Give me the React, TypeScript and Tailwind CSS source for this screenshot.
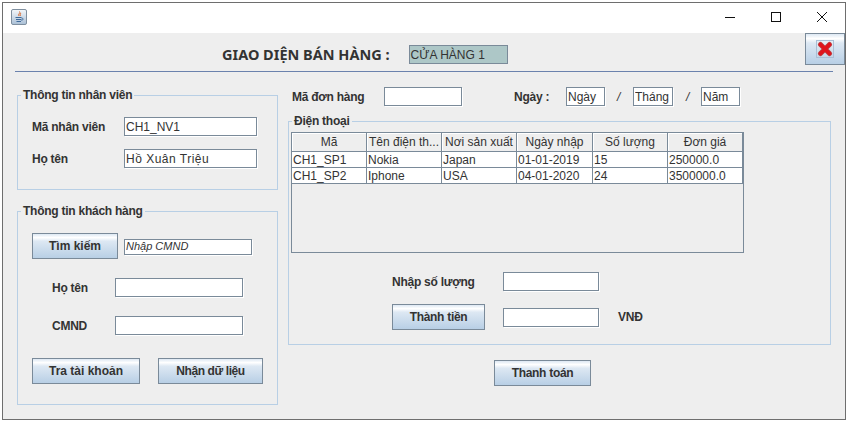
import type { ReactNode } from "react";

const FONT = "font-['Liberation_Sans',Arial,sans-serif]";
const LABEL = "text-[12px] font-bold text-[#333333] leading-none whitespace-nowrap tracking-[-0.25px]";
const METAL = "bg-[linear-gradient(#dde8f3,#ffffff_15%,#dde8f3_30%,#b8cfe5)]";

const COLUMNS = ["Mã", "Tên điện th...", "Nơi sản xuất", "Ngày nhập", "Số lượng", "Đơn giá"];
const ROWS = [
  ["CH1_SP1", "Nokia", "Japan", "01-01-2019", "15", "250000.0"],
  ["CH1_SP2", "Iphone", "USA", "04-01-2020", "24", "3500000.0"],
];

function Field({ value = "", width, className = "" }: { value?: string; width: string; className?: string }) {
  return (
    <input
      readOnly
      value={value}
      className={`${width} h-[19px] shrink-0 border border-[#7a8a99] bg-white pl-[1px] pt-[1px] text-[12px] text-[#333333] shadow-[1px_1px_0_#ffffff] outline-none ${className}`}
    />
  );
}

function Button({ children, width, className = "" }: { children: ReactNode; width: string; className?: string }) {
  return (
    <button
      className={`${width} ${className} ${METAL} h-[26px] shrink-0 border border-[#7a8a99] text-[12px] font-bold text-[#333333]`}
    >
      {children}
    </button>
  );
}

function Group({ title, className, children }: { title: string; className: string; children: ReactNode }) {
  return (
    <div className={`relative border border-[#b8cfe5] ${className}`}>
      <span className={`absolute left-[3px] top-[-7px] bg-[#eeeeee] px-[2px] ${LABEL}`}>{title}</span>
      {children}
    </div>
  );
}

function JavaIcon() {
  return (
    <svg width="16" height="16" viewBox="0 0 16 16" className="mb-[2px] ml-[8px]">
      <defs>
        <linearGradient id="javaBg" x1="0" y1="0" x2="0" y2="1">
          <stop offset="0" stopColor="#f4f7fa" />
          <stop offset="1" stopColor="#a9bfd6" />
        </linearGradient>
      </defs>
      <rect x="0.5" y="0.5" width="15" height="15" rx="1.5" fill="url(#javaBg)" stroke="#7f8f9f" />
      <path d="M8.5 2.5C10 4 6.5 5 8 7M10 4C9 5 9 6 9.5 7" fill="none" stroke="#d9662a" strokeWidth="1" />
      <path d="M4.5 8.5h6M5 10.5h5.5M5.5 12.5h4.5M10.5 9c2 0 2 2 0 2.5" fill="none" stroke="#3f6a9a" strokeWidth="1" />
    </svg>
  );
}

function CloseIcon() {
  return (
    <span className="flex h-[18px] w-[18px] items-center justify-center border border-[#a9bfd6] bg-[linear-gradient(#e6edf4,#c6d6e6)]">
      <svg width="16" height="16" viewBox="0 0 16 16">
        <path d="M3.5 3.5 L12.5 12.5 M12.5 3.5 L3.5 12.5" stroke="#b8474a" strokeWidth="5" strokeLinecap="round" />
        <path d="M3.5 3.5 L12.5 12.5 M12.5 3.5 L3.5 12.5" stroke="#e0141c" strokeWidth="3.6" strokeLinecap="round" />
      </svg>
    </span>
  );
}

export default function App() {
  return (
    <div className={`h-[422px] w-[846px] overflow-hidden bg-white pl-[2px] pt-[2px] ${FONT}`}>
      <div className="h-[418px] w-[844px] border border-[#6e6e6e] bg-[#eeeeee]">
        {/* Title bar */}
        <div className="flex h-[30px] items-center bg-white">
          <JavaIcon />
          <div className="mb-[2px] ml-auto flex items-center">
            <div className="flex h-[28px] w-[46px] items-center justify-center">
              <svg width="10" height="10" viewBox="0 0 10 10">
                <path d="M0 5.5H10" stroke="#111111" />
              </svg>
            </div>
            <div className="flex h-[28px] w-[46px] items-center justify-center">
              <svg width="10" height="10" viewBox="0 0 10 10">
                <rect x="0.5" y="0.5" width="9" height="9" fill="none" stroke="#111111" />
              </svg>
            </div>
            <div className="flex h-[28px] w-[46px] items-center justify-center">
              <svg width="10" height="10" viewBox="0 0 10 10">
                <path d="M0 0L10 10M10 0L0 10" stroke="#111111" />
              </svg>
            </div>
          </div>
        </div>

        {/* Header */}
        <div className="flex h-[32px] items-center pl-[219px]">
          <h1 className="mt-[11px] font-['Noto_Sans',sans-serif] text-[14.5px] font-bold text-[#333333] whitespace-nowrap">
            GIAO DIỆN BÁN HÀNG :
          </h1>
          <div className="ml-[19px] mt-[11px] flex h-[19px] w-[99px] items-center border border-[#7a8a99] bg-[#adc7c7] pl-[1px] pt-[1px] text-[12px] text-[#333333]">
            CỬA HÀNG 1
          </div>
          <button className={`ml-auto flex h-[32px] w-[40px] items-center justify-center border border-[#7a8a99] ${METAL}`}>
            <CloseIcon />
          </button>
        </div>
        <div className="ml-[12px] mt-[6px] h-px w-[818px] bg-[#6b82ad]" />

        <div className="ml-[14px] flex">
          {/* Left column */}
          <div className="mt-[23px] w-[261px] shrink-0">
            <Group title="Thông tin nhân viên" className="h-[95px] pl-[14px] pt-[21px]">
              <div className="flex items-center">
                <span className={`w-[92px] ${LABEL}`}>Mã nhân viên</span>
                <Field value="CH1_NV1" width="w-[133px]" />
              </div>
              <div className="mt-[13px] flex items-center">
                <span className={`w-[92px] ${LABEL}`}>Họ tên</span>
                <Field value="Hồ Xuân Triệu" width="w-[133px]" className="tracking-[0.5px]" />
              </div>
            </Group>

            <Group title="Thông tin khách hàng" className="mt-[21px] h-[194px] pl-[14px] pt-[21px]">
              <div className="flex items-center">
                <Button width="w-[86px]">Tìm kiếm</Button>
                <Field value="Nhập CMND" width="w-[128px]" className="ml-[6px] mt-[1px] !h-[16px] !pt-0 !text-[11px] italic" />
              </div>
              <div className="ml-[20px] mt-[19px] flex items-center">
                <span className={`w-[63px] ${LABEL}`}>Họ tên</span>
                <Field width="w-[128px]" />
              </div>
              <div className="ml-[20px] mt-[19px] flex items-center">
                <span className={`w-[63px] ${LABEL}`}>CMND</span>
                <Field width="w-[128px]" />
              </div>
              <div className="mt-[23px] flex">
                <Button width="w-[108px]">Tra tài khoản</Button>
                <Button width="w-[105px]" className="ml-[18px] tracking-[-0.4px]">
                  Nhận dữ liệu
                </Button>
              </div>
            </Group>
          </div>

          {/* Right column */}
          <div className="ml-[10px] w-[543px] shrink-0">
            <div className="ml-[4px] mt-[15px] flex h-[19px] items-center">
              <span className={`w-[92px] ${LABEL}`}>Mã đơn hàng</span>
              <Field width="w-[78px]" />
              <span className={`ml-[52px] w-[52px] ${LABEL}`}>Ngày :</span>
              <Field value="Ngày" width="w-[39px]" />
              <span className="w-[28px] pl-[12px] text-[12px] italic text-[#333333]">/</span>
              <Field value="Tháng" width="w-[40px]" />
              <span className="w-[28px] pl-[13px] text-[12px] italic text-[#333333]">/</span>
              <Field value="Năm" width="w-[39px]" />
            </div>

            <Group title="Điện thoại" className="mt-[15px] h-[224px] pl-[2px] pt-[10px]">
              <div className="h-[121px] w-[453px] border border-[#7a8a99] text-[12px] leading-none text-[#333333]">
                <div className="grid h-[19px] grid-cols-[75px_75px_75px_76px_75px_75px] border-b border-[#7a8a99]">
                  {COLUMNS.map((col) => (
                    <div
                      key={col}
                      className="flex items-center justify-center border-r border-[#7a8a99] shadow-[inset_1px_1px_0_#ffffff] whitespace-nowrap"
                    >
                      {col}
                    </div>
                  ))}
                </div>
                {ROWS.map((row) => (
                  <div
                    key={row[0]}
                    className="grid h-[16px] grid-cols-[75px_75px_75px_76px_75px_75px] border-b border-[#7a8a99]"
                  >
                    {row.map((cell) => (
                      <div key={cell} className="flex items-center border-r border-[#7a8a99] bg-white pl-[1px] whitespace-nowrap">
                        {cell}
                      </div>
                    ))}
                  </div>
                ))}
              </div>

              <div className="ml-[101px] mt-[19px] flex items-center">
                <span className={`w-[111px] ${LABEL}`}>Nhập số lượng</span>
                <Field width="w-[96px]" />
              </div>
              <div className="ml-[101px] mt-[13px] flex items-center">
                <Button width="w-[93px]" className="tracking-[-0.3px]">
                  Thành tiền
                </Button>
                <Field width="ml-[18px] w-[96px]" />
                <span className={`ml-[19px] ${LABEL}`}>VNĐ</span>
              </div>
            </Group>

            <Button width="w-[97px]" className="ml-[206px] mt-[15px] tracking-[-0.3px]">
              Thanh toán
            </Button>
          </div>
        </div>
      </div>
    </div>
  );
}
